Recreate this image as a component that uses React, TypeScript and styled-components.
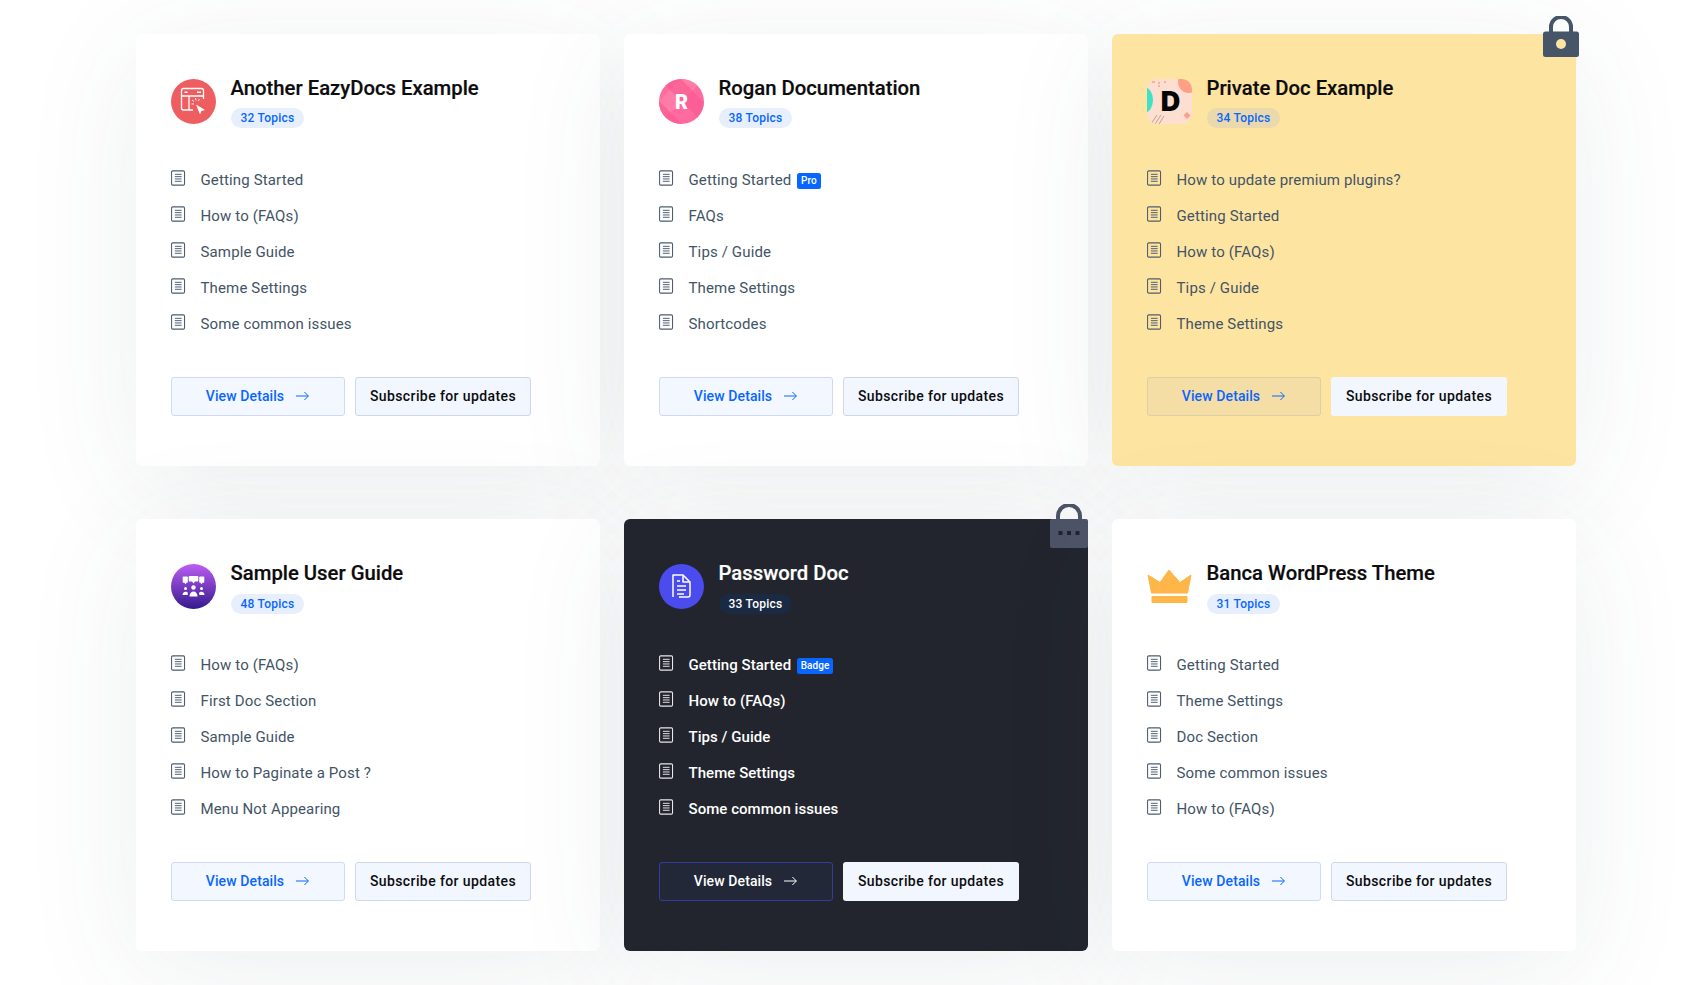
import styled, { createGlobalStyle, css } from 'styled-components'

type Tone = 'light' | 'yellow' | 'dark'

const GlobalStyle = createGlobalStyle`
  html, body {
    margin: 0;
    padding: 0;
    background: #fff;
  }
  body {
    font-family: Roboto, "Liberation Sans", sans-serif;
    -webkit-font-smoothing: antialiased;
  }
`

const Page = styled.div`
  width: 1704px;
  height: 985px;
  overflow: hidden;
  box-sizing: border-box;
  padding: 33.8px 0 0 136px;
`

const Grid = styled.div`
  display: grid;
  grid-template-columns: repeat(3, 464px);
  grid-auto-rows: 432px;
  column-gap: 24px;
  row-gap: 53.6px;
`

const Card = styled.article<{ $tone: Tone }>`
  position: relative;
  box-sizing: border-box;
  padding: 45px 35px;
  border-radius: 6px;
  box-shadow: 0 20px 120px rgba(50, 75, 90, 0.09);
  background: ${(p) =>
    p.$tone === 'yellow' ? '#fee4a1' : p.$tone === 'dark' ? '#22252d' : '#fff'};
`

const Header = styled.header`
  display: flex;
  gap: 14.5px;
  height: 50px;
`

const Logo = styled.svg`
  flex: none;
  width: 45px;
  height: 45px;
  display: block;
`

const Title = styled.h2<{ $tone: Tone }>`
  margin: 0;
  font-size: 20.3px;
  line-height: 18px;
  font-weight: 500;
  -webkit-text-stroke: 0.2px currentColor;
  color: ${(p) => (p.$tone === 'dark' ? '#fff' : '#0c0c0d')};
`

const TopicCount = styled.span<{ $tone: Tone }>`
  display: inline-block;
  margin-top: 11.5px;
  height: 20px;
  line-height: 20px;
  padding: 0 10px;
  border-radius: 10px;
  font-size: 12px;
  font-weight: 500;
  letter-spacing: 0.22px;
  ${(p) =>
    p.$tone === 'dark'
      ? css`
          background: #1b2a43;
          color: #fff;
        `
      : p.$tone === 'yellow'
        ? css`
            background: #e9d9ac;
            color: #0866ff;
          `
        : css`
            background: #e7effd;
            color: #0866ff;
          `}
`

const List = styled.ul`
  list-style: none;
  margin: 33px 0 0;
  padding: 0;
`

const Row = styled.li<{ $tone: Tone }>`
  display: flex;
  align-items: center;
  height: 36px;
  font-size: 15px;
  letter-spacing: ${(p) => (p.$tone === 'dark' ? '0.05px' : '0.14px')};
  font-weight: ${(p) => (p.$tone === 'dark' ? 500 : 400)};
  color: ${(p) => (p.$tone === 'dark' ? '#fff' : '#425466')};
`

const DocGlyph = styled.svg`
  flex: none;
  width: 14.5px;
  height: 16px;
  margin: -4px 15px 0 0;
`

const Tag = styled.span`
  margin: 2px 0 0 5.5px;
  height: 16px;
  line-height: 16px;
  padding: 0 4px;
  border-radius: 2.5px;
  background: #0866ff;
  color: #fff;
  font-size: 10px;
  font-weight: 500;
`

const Actions = styled.div`
  display: flex;
  gap: 10px;
  margin-top: 35px;
`

const DetailsButton = styled.a<{ $tone: Tone }>`
  box-sizing: border-box;
  width: 174px;
  height: 39px;
  padding: 0 1px 1px 0;
  display: flex;
  align-items: center;
  justify-content: center;
  gap: 12px;
  border-radius: 3px;
  font-size: 14px;
  font-weight: 500;
  letter-spacing: 0.1px;
  ${(p) =>
    p.$tone === 'dark'
      ? css`
          background: #222838;
          border: 1px solid #363c9a;
          color: #fff;
        `
      : p.$tone === 'yellow'
        ? css`
            background: #f5dda6;
            border: 1px solid #dccfa2;
            color: #0866ff;
          `
        : css`
            background: #f3f7ff;
            border: 1px solid #cddafa;
            color: #0866ff;
          `}
`

const SubscribeButton = styled.a<{ $tone: Tone }>`
  box-sizing: border-box;
  width: 176px;
  height: 39px;
  padding-bottom: 1px;
  display: flex;
  align-items: center;
  justify-content: center;
  border-radius: 3px;
  font-size: 14px;
  font-weight: 500;
  letter-spacing: 0.4px;
  color: #0c0c0d;
  background: #f2f6ff;
  border: 1px solid ${(p) => (p.$tone === 'light' ? '#cfd8e8' : 'transparent')};
`

const Arrow = styled.svg`
  width: 13px;
  height: 10px;
`

const PadLock = styled.svg<{ $kind: 'private' | 'password' }>`
  position: absolute;
  top: -18px;
  ${(p) =>
    p.$kind === 'private'
      ? css`
          right: -3px;
          width: 36px;
          height: 41px;
        `
      : css`
          top: -15px;
          right: 0;
          width: 38px;
          height: 44px;
        `}
`

const Doc = () => (
  <DocGlyph viewBox="0 0 15 16" fill="none" stroke="#4d5c70">
    <rect x="0.6" y="0.6" width="13.4" height="14.8" rx="1.2" strokeWidth="1.1" />
    <path d="M4 4.2h7M4 6.6h7M4 9h7M4 11.4h7" strokeWidth="1" />
  </DocGlyph>
)

const DarkDoc = () => (
  <DocGlyph viewBox="0 0 15 16" fill="none" stroke="#e6e8ea">
    <rect x="0.6" y="0.6" width="13.4" height="14.8" rx="1.2" strokeWidth="1.1" />
    <path d="M4 4.2h7M4 6.6h7M4 9h7M4 11.4h7" strokeWidth="1" />
  </DocGlyph>
)

const ArrowIcon = () => (
  <Arrow viewBox="0 0 13 10" fill="none" stroke="currentColor" strokeWidth="1">
    <path d="M0 5h12.2M8.4 1l4 4-4 4" />
  </Arrow>
)

const BrowserLogo = () => (
  <Logo viewBox="0 0 45 45">
    <circle cx="22.5" cy="22.5" r="22.5" fill="#ee5d60" />
    <g fill="none" stroke="#fff" strokeWidth="1.3">
      <path d="M22 31H12.500a2 2 0 0 1-2-2V11.500a2 2 0 0 1 2-2h18a2 2 0 0 1 2 2V20" />
      <path d="M10.500 17h22M18 17v14" />
      <path d="M13.500 13.300h3M26 13.300h4" strokeWidth="1.600" />
      <path d="M21 21l2 1.500M20.500 25h2.500M24.500 19l.5 2.500M28.500 20l-1.200 2" strokeWidth="0.9" />
    </g>
    <path d="M25 25.500 34 31l-3.600 1-1.400 3.600z" fill="#fff" />
  </Logo>
)

const RoganLogo = () => (
  <Logo viewBox="0 0 45 45">
    <defs>
      <clipPath id="roganClip">
        <circle cx="22.5" cy="22.5" r="22.5" />
      </clipPath>
    </defs>
    <g clipPath="url(#roganClip)">
      <rect width="45" height="45" fill="#ff6b9e" />
      <path d="M0 22 22 0h23L0 45z" fill="#ff82a8" opacity="0.8" />
      <path d="M22 0l23 23v22L0 0z" fill="#f9568f" opacity="0.6" />
      <path d="M0 22l23 23H0z" fill="#fd5c90" opacity="0.8" />
    </g>
    <text
      x="22.5"
      y="29.5"
      textAnchor="middle"
      fontFamily="Roboto, sans-serif"
      fontWeight="900"
      fontSize="20"
      fill="#fff"
    >
      R
    </text>
  </Logo>
)

const DotsLogo = () => (
  <Logo viewBox="0 0 45 45">
    <defs>
      <clipPath id="dotsClip">
        <rect width="45" height="45" rx="10" />
      </clipPath>
    </defs>
    <g clipPath="url(#dotsClip)">
      <rect width="45" height="45" fill="#fddfd2" />
      <ellipse cx="-3" cy="21" rx="9" ry="13" fill="#3fe3c4" />
      <ellipse cx="42" cy="3" rx="11" ry="11" fill="#ff9f85" />
      <path d="M5 3h3M11 4h2M17 3h2M11 7h2" stroke="#ff9f85" strokeWidth="1.6" />
      <path d="M40 33l3.5 3.5-3.5 3.5-3.5-3.5z" fill="#ff9f85" />
      <path d="M4 45l6-9M8 45l6-9M12 45l5-8" stroke="#b98a80" strokeWidth="0.8" fill="none" />
    </g>
    <text
      x="23.5"
      y="31.500"
      textAnchor="middle"
      fontFamily="Inter, Roboto, sans-serif"
      fontWeight="900"
      fontSize="27"
      fill="#050505"
    >
      D
    </text>
  </Logo>
)

const PeopleLogo = () => (
  <Logo viewBox="0 0 45 45">
    <defs>
      <linearGradient id="peopleFill" x1="0" y1="0" x2="0" y2="1">
        <stop offset="0" stopColor="#bd5df2" />
        <stop offset="1" stopColor="#341a8e" />
      </linearGradient>
    </defs>
    <circle cx="22.5" cy="22.5" r="22.5" fill="url(#peopleFill)" />
    <g fill="#fff">
      <path d="M12.500 12.500h3.500a.8.8 0 0 1 .8.8v4.700a.8.8 0 0 1-.8.8h-.5l-1 1.500-1-1.500h-1a.8.8 0 0 1-.8-.8v-4.700a.8.8 0 0 1 .8-.8z" />
      <path d="M29 12.500h3.500a.8.8 0 0 1 .8.8v4.700a.8.8 0 0 1-.8.8h-1l-1 1.500-1-1.500h-.5a.8.8 0 0 1-.8-.8v-4.700a.8.8 0 0 1 .8-.8z" />
      <path d="M18.500 12h8a.8.8 0 0 1 .8.8v4a.8.8 0 0 1-.8.8h-2.500l-1.500 1.800-1.500-1.800h-2.500a.8.8 0 0 1-.8-.8v-4a.8.8 0 0 1 .8-.8z" />
      <circle cx="22.500" cy="23.500" r="2.200" />
      <path d="M18.500 32.500c0-3 1.600-5 4-5s4 2 4 5z" />
      <circle cx="14.500" cy="24.500" r="1.500" />
      <path d="M11.500 31c0-2 1.200-3.300 3-3.300 1 0 2 .5 2.500 1.300l-.5 2z" />
      <circle cx="30.500" cy="24.500" r="1.500" />
      <path d="M33.500 31c0-2-1.200-3.300-3-3.300-1 0-2 .5-2.500 1.300l.5 2z" />
    </g>
  </Logo>
)

const PageLogo = () => (
  <Logo viewBox="0 0 45 45">
    <circle cx="22.500" cy="22.500" r="22.500" fill="#4b4cee" />
    <g fill="none" stroke="#fff" strokeWidth="1.500" strokeLinejoin="round">
      <path d="M14 33V11h10l7 7v13a2 2 0 0 1-2 2h-9" />
      <path d="M24 11.500V18h6.500" />
      <path d="M18 17h3M18 22h9M18 26h9M18 30h7" />
    </g>
  </Logo>
)

const CrownLogo = () => (
  <Logo viewBox="0 0 45 45">
    <path
      d="M1 11l12 7.500L22 6l11 12.500L44 11l-3.500 18h-36z"
      fill="#ffb648"
      strokeLinejoin="round"
      stroke="#ffb648"
    />
    <rect x="4.500" y="32" width="36" height="7" rx="1" fill="#ffb648" />
  </Logo>
)

const PrivateLock = () => (
  <PadLock $kind="private" viewBox="0 0 36 41">
    <path d="M8 17V11a10 10 0 0 1 20 0v6" fill="none" stroke="#475569" strokeWidth="4" />
    <rect y="15.500" width="36" height="25.500" rx="2.500" fill="#475569" />
    <circle cx="18" cy="28" r="5" fill="#fee4a1" />
  </PadLock>
)

const PasswordLock = () => (
  <PadLock $kind="password" viewBox="0 0 38 44">
    <path d="M8 16V12a11 11 0 0 1 22 0v4" fill="none" stroke="#4e5468" strokeWidth="4" />
    <rect y="15" width="38" height="29" rx="2" fill="#4e5468" />
    <rect x="8.500" y="27" width="4" height="4" fill="#22252d" />
    <rect x="17" y="27" width="4" height="4" fill="#22252d" />
    <rect x="25.500" y="27" width="4" height="4" fill="#22252d" />
  </PadLock>
)

type DocCard = {
  title: string
  topics: number
  tone: Tone
  logo: React.ReactNode
  lock?: React.ReactNode
  items: { label: string; tag?: string }[]
}

const cards: DocCard[] = [
  {
    title: 'Another EazyDocs Example',
    topics: 32,
    tone: 'light',
    logo: <BrowserLogo />,
    items: [
      { label: 'Getting Started' },
      { label: 'How to (FAQs)' },
      { label: 'Sample Guide' },
      { label: 'Theme Settings' },
      { label: 'Some common issues' },
    ],
  },
  {
    title: 'Rogan Documentation',
    topics: 38,
    tone: 'light',
    logo: <RoganLogo />,
    items: [
      { label: 'Getting Started', tag: 'Pro' },
      { label: 'FAQs' },
      { label: 'Tips / Guide' },
      { label: 'Theme Settings' },
      { label: 'Shortcodes' },
    ],
  },
  {
    title: 'Private Doc Example',
    topics: 34,
    tone: 'yellow',
    logo: <DotsLogo />,
    lock: <PrivateLock />,
    items: [
      { label: 'How to update premium plugins?' },
      { label: 'Getting Started' },
      { label: 'How to (FAQs)' },
      { label: 'Tips / Guide' },
      { label: 'Theme Settings' },
    ],
  },
  {
    title: 'Sample User Guide',
    topics: 48,
    tone: 'light',
    logo: <PeopleLogo />,
    items: [
      { label: 'How to (FAQs)' },
      { label: 'First Doc Section' },
      { label: 'Sample Guide' },
      { label: 'How to Paginate a Post ?' },
      { label: 'Menu Not Appearing' },
    ],
  },
  {
    title: 'Password Doc',
    topics: 33,
    tone: 'dark',
    logo: <PageLogo />,
    lock: <PasswordLock />,
    items: [
      { label: 'Getting Started', tag: 'Badge' },
      { label: 'How to (FAQs)' },
      { label: 'Tips / Guide' },
      { label: 'Theme Settings' },
      { label: 'Some common issues' },
    ],
  },
  {
    title: 'Banca WordPress Theme',
    topics: 31,
    tone: 'light',
    logo: <CrownLogo />,
    items: [
      { label: 'Getting Started' },
      { label: 'Theme Settings' },
      { label: 'Doc Section' },
      { label: 'Some common issues' },
      { label: 'How to (FAQs)' },
    ],
  },
]

const App: React.FC = () => {
  return (
    <Page>
      <GlobalStyle />
      <Grid>
        {cards.map((card) => (
          <Card key={card.title} $tone={card.tone}>
            {card.lock}
            <Header>
              {card.logo}
              <div>
                <Title $tone={card.tone}>{card.title}</Title>
                <TopicCount $tone={card.tone}>{card.topics} Topics</TopicCount>
              </div>
            </Header>
            <List>
              {card.items.map((item) => (
                <Row key={item.label} $tone={card.tone}>
                  {card.tone === 'dark' ? <DarkDoc /> : <Doc />}
                  {item.label}
                  {item.tag && <Tag>{item.tag}</Tag>}
                </Row>
              ))}
            </List>
            <Actions>
              <DetailsButton $tone={card.tone}>
                View Details <ArrowIcon />
              </DetailsButton>
              <SubscribeButton $tone={card.tone}>Subscribe for updates</SubscribeButton>
            </Actions>
          </Card>
        ))}
      </Grid>
    </Page>
  )
}

export default App
